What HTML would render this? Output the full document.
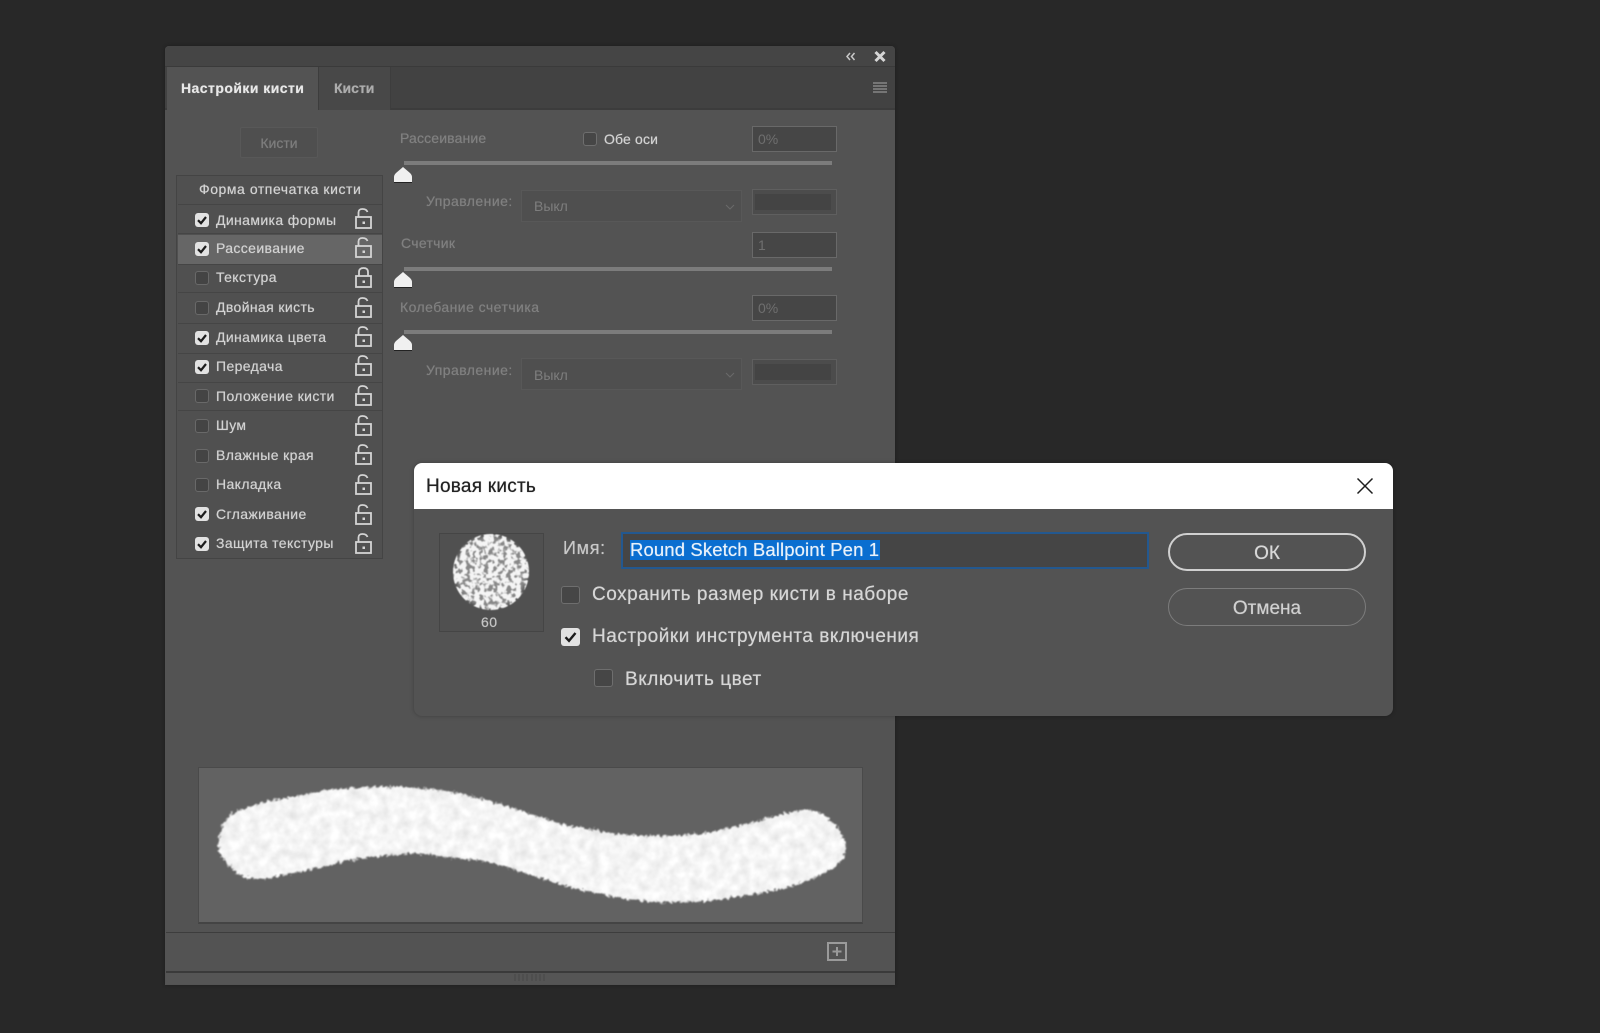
<!DOCTYPE html>
<html lang="ru"><head><meta charset="utf-8"><title>Новая кисть</title>
<style>
html,body{margin:0;padding:0;width:1600px;height:1033px;overflow:hidden;background:#282828;font-family:"Liberation Sans",sans-serif}
div,span.a{position:absolute;box-sizing:border-box}
.t{position:absolute;white-space:nowrap;line-height:20px;height:20px;font-size:14px;color:#d2d2d2;text-shadow:0 0 .6px currentColor}
.g{color:#808080}
.r{font-size:14px;left:216px;letter-spacing:.38px}
.cb{left:195px;width:14px;height:14px;border-radius:3px;background:#444;border:1px solid #696969}
.cb.on{background:#e2e2e2;border:0}
.cb svg,.dc svg{position:absolute;left:0;top:0;width:100%;height:100%}
.sep{left:178px;width:204px;height:1px;background:#454545}
.lock{position:absolute;left:354px;width:19px;height:21px}
.slider{left:404px;width:428px;height:4px;background:#7c7c7c}
.thumb{position:absolute;left:394px;width:18px;height:16px}
.inp{left:752px;width:85px;height:26px;background:#464646;border:1px solid #696969;color:#6f6f6f;font-size:14px;line-height:24px;padding-left:5px}
.sel{left:521px;width:221px;height:32px;background:#4f4f4f;border:1px solid #585858;color:#7e7e7e;font-size:14px;line-height:31px;padding-left:12px}
.dc{width:19px;height:18px;border-radius:3px;background:#464646;border:1px solid #6e6e6e}
.dc.on{background:#e2e2e2;border:0}
.dt{font-size:19px;line-height:24px;height:24px;color:#d6d6d6;letter-spacing:.52px}
</style></head><body>
<svg width="0" height="0" style="position:absolute">
<defs>
<symbol id="lk" viewBox="0 0 19 21"><g fill="none" stroke="#d4d4d4" stroke-width="1.800"><rect x="2" y="9" width="15" height="11"/><path d="M4.500 9V4.500Q4.500 1 8.500 1T13.500 4"/></g><rect x="8.500" y="13.500" width="2.500" height="2.500" fill="#d4d4d4"/></symbol>
<symbol id="lc" viewBox="0 0 19 21"><g fill="none" stroke="#d4d4d4" stroke-width="1.800"><rect x="2" y="9" width="15" height="11"/><path d="M5 9V5Q5 1 9.500 1T14 5V9"/></g><rect x="8.500" y="13.500" width="2.500" height="2.500" fill="#d4d4d4"/></symbol>
<symbol id="ck" viewBox="0 0 14 14"><path d="M3 7.200L6 10.200L11 4" fill="none" stroke="#1c1c1c" stroke-width="2.200"/></symbol>
<symbol id="th" viewBox="0 0 18 16"><path d="M9 0L16 6Q18 8 18 10V15.500H0V10Q0 8 2 6Z" fill="#f0f0f0"/><path d="M0 15H18V16H0Z" fill="#222"/></symbol>
<filter id="rough" x="-5%" y="-15%" width="110%" height="130%" color-interpolation-filters="sRGB">
<feGaussianBlur in="SourceAlpha" stdDeviation="4" result="b"/>
<feTurbulence type="fractalNoise" baseFrequency=".3" numOctaves="2" seed="4"/>
<feColorMatrix values="0 0 0 0 1  0 0 0 0 1  0 0 0 0 1  1 0 0 0 0" result="n"/>
<feComposite in="b" in2="n" operator="arithmetic" k1="0" k2="1" k3=".7" k4="-.35"/>
<feComponentTransfer result="m"><feFuncA type="linear" slope="6" intercept="-2.500"/></feComponentTransfer>
<feTurbulence type="fractalNoise" baseFrequency=".1" numOctaves="3" seed="9"/>
<feColorMatrix values=".16 0 0 0 .88  .16 0 0 0 .88  .16 0 0 0 .88  0 0 0 0 1"/>
<feComposite in2="m" operator="in"/>
<feGaussianBlur stdDeviation=".8"/>
</filter>
<filter id="speck" x="-10%" y="-10%" width="120%" height="120%" color-interpolation-filters="sRGB"><feTurbulence type="fractalNoise" baseFrequency=".22" numOctaves="2" seed="7"/><feColorMatrix values="0 0 0 0 .96  0 0 0 0 .96  0 0 0 0 .96  4 6 0 0 -4.100"/><feComposite in2="SourceGraphic" operator="in"/><feGaussianBlur stdDeviation=".55"/></filter>
<filter id="soft" x="-20%" y="-20%" width="140%" height="140%"><feGaussianBlur stdDeviation="1.500"/></filter>
</defs>
</svg>

<!-- Panel -->
<div style="left:165px;top:46px;width:730px;height:939px;background:#535353;border-radius:4px 4px 0 0;box-shadow:0 0 3px #1c1c1c"></div>
<div style="left:165px;top:46px;width:730px;height:21px;background:#454545;border-radius:4px 4px 0 0;border-bottom:1px solid #3a3a3a"></div>
<div style="left:165px;top:67px;width:730px;height:43px;background:#424242;border-bottom:2px solid #3c3c3c"></div>
<div style="left:167px;top:67px;width:151px;height:44px;background:#535353"></div>
<div style="left:318px;top:67px;width:73px;height:43px;background:#484848;border-right:1px solid #3d3d3d;border-left:1px solid #3d3d3d"></div>
<span class="t" style="left:181px;top:78px;font-weight:bold;color:#e8e8e8;letter-spacing:.45px">Настройки кисти</span>
<span class="t" style="left:334px;top:78px;font-weight:bold;color:#adadad">Кисти</span>
<svg style="position:absolute;left:844px;top:50px" width="50" height="14"><path d="M6 3L3 6.500L6 10M10.500 3L7.500 6.500L10.500 10" fill="none" stroke="#c8c8c8" stroke-width="1.500"/><path d="M31.500 2L40.500 11M40.500 2L31.500 11" stroke="#d6d6d6" stroke-width="3"/></svg>
<svg style="position:absolute;left:873px;top:82px" width="14" height="12"><path d="M0 1H14M0 4H14M0 7H14M0 10H14" stroke="#a8a8a8" stroke-width="1"/></svg>

<div style="left:240px;top:127px;width:78px;height:31px;background:#4f4f4f;border:1px solid #585858;border-radius:2px;color:#7d7d7d;font-size:14px;line-height:30px;text-align:center;text-shadow:0 0 .6px currentColor">Кисти</div>

<!-- Left list -->
<div style="left:176px;top:175px;width:207px;height:384px;border:1px solid #444;background:#505050"></div>
<span class="t" style="left:199px;top:179px;letter-spacing:.55px">Форма отпечатка кисти</span>
<div style="left:178px;top:235px;width:204px;height:29px;background:#666"></div>
<div class="sep" style="top:204px"></div><div class="sep" style="top:233px"></div><div class="sep" style="top:264px"></div><div class="sep" style="top:292px"></div><div class="sep" style="top:323px"></div><div class="sep" style="top:353px"></div><div class="sep" style="top:382px"></div><div class="sep" style="top:410px"></div>

<div class="cb on" style="top:213px"><svg><use href="#ck"/></svg></div><span class="t r" style="top:210px">Динамика формы</span><svg class="lock" style="top:208px"><use href="#lk"/></svg>
<div class="cb on" style="top:242px"><svg><use href="#ck"/></svg></div><span class="t r" style="top:238px">Рассеивание</span><svg class="lock" style="top:237px"><use href="#lk"/></svg>
<div class="cb" style="top:271px"></div><span class="t r" style="top:267px">Текстура</span><svg class="lock" style="top:267px"><use href="#lc"/></svg>
<div class="cb" style="top:301px"></div><span class="t r" style="top:297px">Двойная кисть</span><svg class="lock" style="top:297px"><use href="#lk"/></svg>
<div class="cb on" style="top:331px"><svg><use href="#ck"/></svg></div><span class="t r" style="top:327px">Динамика цвета</span><svg class="lock" style="top:326px"><use href="#lk"/></svg>
<div class="cb on" style="top:360px"><svg><use href="#ck"/></svg></div><span class="t r" style="top:356px">Передача</span><svg class="lock" style="top:355px"><use href="#lk"/></svg>
<div class="cb" style="top:389px"></div><span class="t r" style="top:386px">Положение кисти</span><svg class="lock" style="top:385px"><use href="#lk"/></svg>
<div class="cb" style="top:419px"></div><span class="t r" style="top:415px">Шум</span><svg class="lock" style="top:415px"><use href="#lk"/></svg>
<div class="cb" style="top:449px"></div><span class="t r" style="top:445px">Влажные края</span><svg class="lock" style="top:444px"><use href="#lk"/></svg>
<div class="cb" style="top:478px"></div><span class="t r" style="top:474px">Накладка</span><svg class="lock" style="top:474px"><use href="#lk"/></svg>
<div class="cb on" style="top:507px"><svg><use href="#ck"/></svg></div><span class="t r" style="top:504px">Сглаживание</span><svg class="lock" style="top:504px"><use href="#lk"/></svg>
<div class="cb on" style="top:537px"><svg><use href="#ck"/></svg></div><span class="t r" style="top:533px">Защита текстуры</span><svg class="lock" style="top:533px"><use href="#lk"/></svg>

<!-- Right controls -->
<span class="t g" style="left:400px;top:128px;letter-spacing:.15px">Рассеивание</span>
<div style="left:583px;top:132px;width:14px;height:14px;border-radius:3px;background:#464646;border:1px solid #6e6e6e"></div>
<span class="t" style="left:604px;top:129px;letter-spacing:.15px">Обе оси</span>
<div class="inp" style="top:126px">0%</div>
<div class="slider" style="top:161px"></div>
<svg class="thumb" style="top:167px"><use href="#th"/></svg>
<span class="t g" style="left:426px;top:191px;letter-spacing:.45px">Управление:</span>
<div class="sel" style="top:190px">Выкл<svg style="position:absolute;right:6px;top:12px" width="10" height="8"><path d="M1 2L5 6L9 2" fill="none" stroke="#6a6a6a"/></svg></div>
<div class="inp" style="top:189px;background:#4c4c4c;border-color:#5f5f5f"><div style="left:2px;top:4px;width:76px;height:16px;background:#444"></div></div>
<span class="t g" style="left:401px;top:233px;letter-spacing:.3px">Счетчик</span>
<div class="inp" style="top:232px">1</div>
<div class="slider" style="top:267px"></div>
<svg class="thumb" style="top:272px"><use href="#th"/></svg>
<span class="t g" style="left:400px;top:297px;letter-spacing:.45px">Колебание счетчика</span>
<div class="inp" style="top:295px">0%</div>
<div class="slider" style="top:330px"></div>
<svg class="thumb" style="top:335px"><use href="#th"/></svg>
<span class="t g" style="left:426px;top:360px;letter-spacing:.45px">Управление:</span>
<div class="sel" style="top:358px;line-height:33px">Выкл<svg style="position:absolute;right:6px;top:12px" width="10" height="8"><path d="M1 2L5 6L9 2" fill="none" stroke="#6a6a6a"/></svg></div>
<div class="inp" style="top:359px;background:#4c4c4c;border-color:#5f5f5f"><div style="left:2px;top:4px;width:76px;height:16px;background:#444"></div></div>

<!-- Preview -->
<div style="left:198px;top:767px;width:665px;height:157px;background:#626262;border:1px solid #4a4a4a;border-bottom:2px solid #444"></div>
<svg style="position:absolute;left:198px;top:767px" width="665" height="157" viewBox="198 767 665 157">
<path filter="url(#rough)" fill="#f5f5f5" d="M222 828C226 816 234 811 243 809C262 802 280 798 294 797C320 790 340 788 358 788C380 786 400 786 412 788C432 789 448 790 465 795C485 800 505 805 522 811C545 820 570 827 590 829C606 833 620 834 632 835C655 836 680 836 700 834C720 830 738 826 754 822C775 816 790 811 804 810C815 808 826 815 834 824C842 832 846 840 846 848C845 858 840 866 830 870C820 876 812 880 804 882C785 889 768 892 752 894C730 899 700 903 672 902C650 903 630 899 612 897C595 893 578 889 562 885C540 878 522 872 504 866C488 862 470 858 452 858C432 855 415 852 402 854C385 856 365 858 350 860C332 865 318 868 302 871C285 876 268 879 252 878C240 879 232 870 228 864C222 858 216 852 218 845C218 838 220 833 222 828Z"/>
</svg>
<div style="left:166px;top:932px;width:729px;height:1px;background:#3d3d3d"></div>
<div style="left:166px;top:971px;width:729px;height:2px;background:#3a3a3a"></div>
<div style="left:166px;top:973px;width:729px;height:11px;background:#555"></div>
<svg style="position:absolute;left:514px;top:972px" width="32" height="10"><path d="M1 2V9M5 2V9M9 2V9M13 2V9M18 2V9M22 2V9M26 2V9M30 2V9" stroke="#484848"/></svg>
<svg style="position:absolute;left:827px;top:942px" width="20" height="19"><rect x="1" y="1" width="18" height="17" fill="none" stroke="#9a9a9a" stroke-width="2"/><path d="M10 5V14M5.500 9.500H14.500" stroke="#9a9a9a" stroke-width="2"/></svg>

<!-- Dialog -->
<div style="left:414px;top:463px;width:979px;height:253px;background:#535353;border-radius:8px;overflow:hidden;box-shadow:0 0 4px rgba(0,0,0,.25)">
<div style="left:0;top:0;width:979px;height:46px;background:#fff"></div>
</div>
<span class="t" style="left:426px;top:475px;height:24px;line-height:24px;font-size:19px;color:#222;letter-spacing:.25px">Новая кисть</span>
<svg style="position:absolute;left:1356px;top:477px" width="18" height="18"><path d="M1.500 1.500L16.500 16.500M16.500 1.500L1.500 16.500" stroke="#1e1e1e" stroke-width="1.500"/></svg>

<div style="left:439px;top:533px;width:105px;height:99px;background:#505050;border:1px solid #454545"></div>
<svg style="position:absolute;left:439px;top:533px" width="105" height="80"><circle cx="52" cy="39" r="36" fill="#888" filter="url(#soft)"/><circle cx="52" cy="39" r="38" fill="#fff" filter="url(#speck)"/></svg>
<span class="t" style="left:481px;top:612px;font-size:14px;color:#c4c4c4;letter-spacing:.5px">60</span>

<span class="t" style="left:563px;top:536px;height:24px;line-height:24px;font-size:18px;color:#c8c8c8;letter-spacing:.7px">Имя:</span>
<div style="left:621px;top:532px;width:528px;height:37px;background:#454545;border:2px solid #23588f"></div>
<span class="a" style="left:630px;top:540px;width:250px;height:20px;background:#0a6ed0"></span>
<span class="t" style="left:630px;top:538px;height:24px;line-height:24px;font-size:18.500px;color:#e8f1fa;letter-spacing:.12px">Round Sketch Ballpoint Pen 1</span>

<div class="dc" style="left:561px;top:586px"></div>
<span class="t dt" style="left:592px;top:583px">Сохранить размер кисти в наборе</span>
<div class="dc on" style="left:561px;top:628px"><svg viewBox="0 0 19 18"><path d="M4.500 9.200L8 12.800L14.500 5" fill="none" stroke="#1c1c1c" stroke-width="2.400"/></svg></div>
<span class="t dt" style="left:592px;top:625px">Настройки инструмента включения</span>
<div class="dc" style="left:594px;top:669px"></div>
<span class="t dt" style="left:625px;top:668px">Включить цвет</span>

<div style="left:1168px;top:533px;width:198px;height:38px;border:2px solid #d0d0d0;border-radius:19px;color:#d8d8d8;font-size:19px;line-height:37px;text-align:center;text-shadow:0 0 .6px currentColor">ОК</div>
<div style="left:1168px;top:588px;width:198px;height:38px;border:1px solid #7c7c7c;border-radius:19px;color:#d0d0d0;font-size:19px;line-height:40px;text-align:center;text-shadow:0 0 .6px currentColor">Отмена</div>
</body></html>
